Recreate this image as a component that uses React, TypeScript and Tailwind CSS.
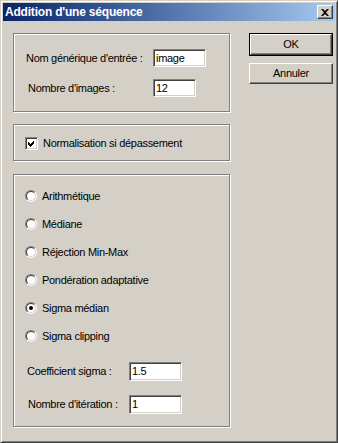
import type { ReactNode } from 'react';

const sunken =
  'border border-t-[#808080] border-l-[#808080] border-b-white border-r-white shadow-[inset_1px_1px_0_#404040,inset_-1px_-1px_0_#d4d0c8]';
const raised =
  'border border-t-white border-l-white border-b-[#404040] border-r-[#404040] shadow-[inset_-1px_-1px_0_#808080]';

function GroupBox({ className, children }: { className: string; children: ReactNode }) {
  return (
    <div
      className={`border border-[#808080] shadow-[inset_1px_1px_0_#fff,1px_1px_0_#fff] ${className}`}
    >
      {children}
    </div>
  );
}

function TextBox({ value, className }: { value: string; className: string }) {
  return (
    <div className={`${sunken} bg-white flex items-center pl-[2px] ${className}`}>
      <span className="leading-none">{value}</span>
    </div>
  );
}

function Radio({ label, checked }: { label: string; checked?: boolean }) {
  return (
    <div className="flex items-center h-[16px]">
      <div className="ml-[11px] w-[12px] h-[12px] rounded-full border border-t-[#808080] border-l-[#808080] border-b-white border-r-white">
        <div className="w-full h-full rounded-full border border-t-[#404040] border-l-[#404040] border-b-[#d4d0c8] border-r-[#d4d0c8] bg-white flex items-center justify-center">
          {checked && <div className="w-[4px] h-[4px] rounded-full bg-black" />}
        </div>
      </div>
      <span className="ml-[5px]">{label}</span>
    </div>
  );
}

function Checkbox({ label, checked }: { label: string; checked?: boolean }) {
  return (
    <div className="flex items-center">
      <div className={`ml-[11px] w-[13px] h-[13px] bg-white ${sunken}`}>
        {checked && (
          <svg width="11" height="11" viewBox="0 0 11 11" className="block">
            <path d="M2 4 L4 6 L8 2 L8 5 L4 9 L2 7 Z" fill="#000" shapeRendering="crispEdges" />
          </svg>
        )}
      </div>
      <span className="ml-[5px]">{label}</span>
    </div>
  );
}

function Button({ label, isDefault }: { label: string; isDefault?: boolean }) {
  if (isDefault) {
    return (
      <div className="w-[84px] h-[23px] border border-black">
        <div className={`w-full h-full ${raised} flex items-center justify-center`}>{label}</div>
      </div>
    );
  }
  return (
    <div className={`w-[84px] h-[21px] ${raised} flex items-center justify-center`}>{label}</div>
  );
}

export default function App() {
  return (
    <div className="w-[338px] h-[443px] bg-[#d4d0c8] p-[2px] border border-t-[#d4d0c8] border-l-[#d4d0c8] border-b-[#404040] border-r-[#404040] shadow-[inset_1px_1px_0_#fff,inset_-1px_-1px_0_#808080] font-['Liberation_Sans',Arial,sans-serif] text-[11px] tracking-[-0.3px] text-black flex flex-col">
      <div className="h-[18px] bg-linear-to-r from-[#0a246a] to-[#a6caf0] flex items-center justify-between pl-[2px] pr-[2px]">
        <span className="text-white font-bold text-[12px] tracking-[-0.2px] leading-none">
          Addition d'une séquence
        </span>
        <div className={`w-[16px] h-[14px] bg-[#d4d0c8] ${raised} flex items-center justify-center`}>
          <svg width="8" height="7" viewBox="0 0 8 7" className="block">
            <path d="M0 0 H2 L4 2 L6 0 H8 L5 3.5 L8 7 H6 L4 5 L2 7 H0 L3 3.5 Z" fill="#000" />
          </svg>
        </div>
      </div>

      <div className="flex pt-[12px] pl-[10px]">
        <div className="flex flex-col w-[217px]">
          <GroupBox className="h-[79px] pt-[15px] flex flex-col gap-[12px]">
            <div className="flex items-center">
              <span className="pl-[12px] w-[139px]">Nom générique d'entrée :</span>
              <TextBox value="image" className="w-[53px] h-[18px]" />
            </div>
            <div className="flex items-center">
              <span className="pl-[14px] w-[139px]">Nombre d'images :</span>
              <TextBox value="12" className="w-[43px] h-[18px]" />
            </div>
          </GroupBox>

          <GroupBox className="mt-[12px] h-[37px] pt-[10px]">
            <Checkbox label="Normalisation si dépassement" checked />
          </GroupBox>

          <GroupBox className="mt-[13px] h-[253px] pt-[13px] flex flex-col">
            <div className="flex flex-col gap-[12px]">
              <Radio label="Arithmétique" />
              <Radio label="Médiane" />
              <Radio label="Réjection Min-Max" />
              <Radio label="Pondération adaptative" />
              <Radio label="Sigma médian" checked />
              <Radio label="Sigma clipping" />
            </div>
            <div className="flex items-center mt-[18px]">
              <span className="pl-[13px] w-[115px]">Coefficient sigma :</span>
              <TextBox value="1.5" className="w-[53px] h-[19px]" />
            </div>
            <div className="flex items-center mt-[14px]">
              <span className="pl-[14px] w-[115px]">Nombre d'itération :</span>
              <TextBox value="1" className="w-[53px] h-[19px]" />
            </div>
          </GroupBox>
        </div>

        <div className="ml-[19px] flex flex-col gap-[7px]">
          <Button label="OK" isDefault />
          <Button label="Annuler" />
        </div>
      </div>
    </div>
  );
}
